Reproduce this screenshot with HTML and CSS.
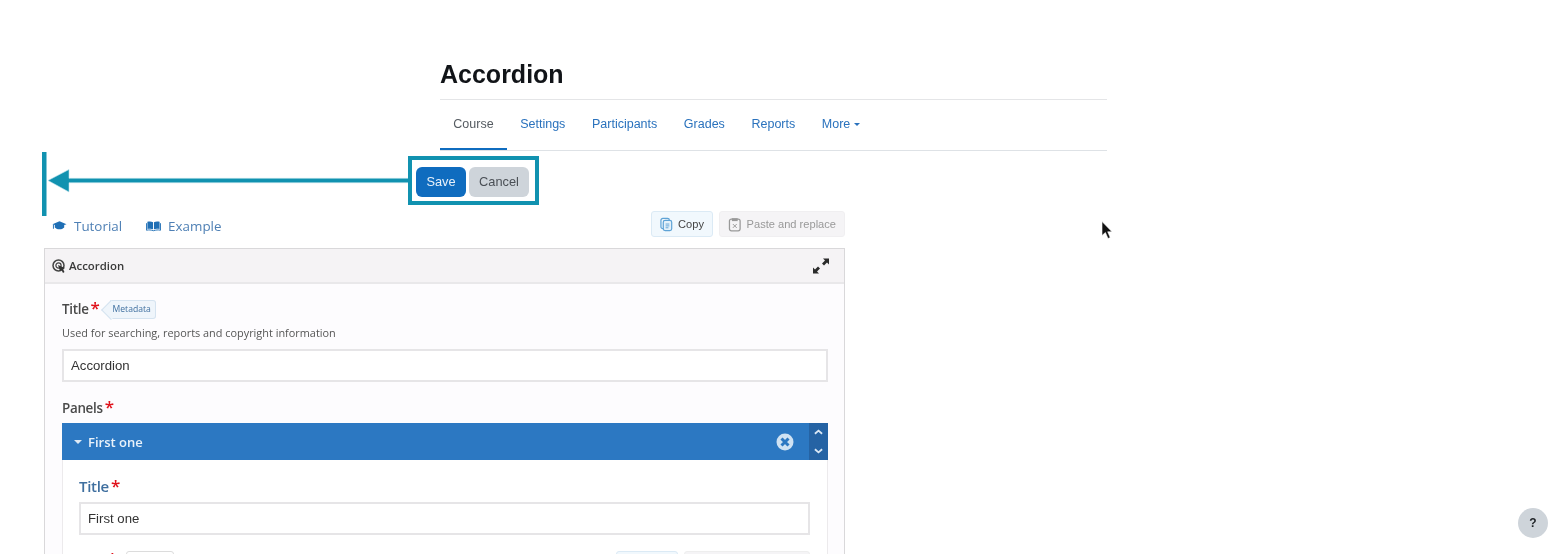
FILE: index.html
```html
<!DOCTYPE html>
<html lang="en">
<head>
<meta charset="utf-8">
<title>Accordion</title>
<link rel="stylesheet" href="styles.css">
</head>
<body>
<div class="page">
  <header class="course">
    <h1 class="course-title">Accordion</h1>
    <nav class="tabs">
      <a class="tab tab-active">Course</a>
      <a class="tab">Settings</a>
      <a class="tab">Participants</a>
      <a class="tab">Grades</a>
      <a class="tab">Reports</a>
      <a class="tab">More<span class="caret"></span></a>
    </nav>
  </header>
  <div class="actions">
    <button class="btn btn-save">Save</button>
    <button class="btn btn-cancel">Cancel</button>
  </div>
  <main class="editor">
    <div class="toolbar">
      <div class="links">
        <a class="link">
          <svg class="link-icon" viewBox="0 0 16 12"><path d="M8 1 0.5 4 3 5v2.500C4.500 9 6 9.400 8 9.400S11.500 9 13 7.500V5l2.500-1zM1 4.500v4.500h1V5z" fill="#1f6fb5"/></svg>
          Tutorial
        </a>
        <a class="link">
          <svg class="link-icon" viewBox="0 0 16 12"><path d="M1.500 1.500C3.500 1 6 1 7.500 2v7.500C6 8.800 3.500 8.800 1.500 9.300zM14.500 1.500C12.500 1 10 1 8.500 2v7.500c1.500-.7 4-.7 6-.2z" fill="#1f6fb5"/><path d="M.5 3v7.500c2.500-.6 5-.3 7.500.5 2.500-.8 5-1.100 7.500-.5V3" fill="none" stroke="#1f6fb5"/></svg>
          Example
        </a>
      </div>
      <div class="clip-buttons">
        <button class="clip clip-copy">
          <svg class="clip-icon" viewBox="0 0 14 15"><rect x="1" y="1" width="9" height="11" rx="2" fill="none" stroke="#5fa3d6" stroke-width="1.300"/><rect x="3.500" y="3" width="9" height="11" rx="2" fill="#e4f1fa" stroke="#5fa3d6" stroke-width="1.300"/><path d="M6 7h4M6 9h4M6 11h3" stroke="#5fa3d6"/></svg>
          Copy
        </button>
        <button class="clip clip-paste">
          <svg class="clip-icon" viewBox="0 0 14 15"><rect x="1.500" y="2" width="11" height="12" rx="2" fill="none" stroke="#999" stroke-width="1.300"/><rect x="4" y="1" width="6" height="3" fill="#999"/><path d="M5 7l4 4M9 7l-4 4" stroke="#999"/></svg>
          Paste and replace
        </button>
      </div>
    </div>
    <section class="box">
      <div class="box-head">
        <span class="box-title">
          <svg class="box-icon" viewBox="0 0 14 14"><circle cx="6.500" cy="6.500" r="5.500" fill="none" stroke="#444" stroke-width="1.500"/><circle cx="6.500" cy="6.500" r="2.600" fill="none" stroke="#444" stroke-width="1.200"/><path d="M6 6l7 3-2 1 1.500 3-1.500 1-1.500-3L8 12z" fill="#333"/></svg>
          Accordion
        </span>
        <svg class="expand" viewBox="0 0 18 18"><path d="M11 1.500h6v6l-2-2-3 3-2-2 3-3zM7 16.500H1v-6l2 2 3-3 2 2-3 3z" fill="#2b2b2b"/></svg>
      </div>
      <div class="box-body">
        <div class="label-row">
          <span class="label">Title<span class="req">*</span></span>
          <span class="tag"><span class="tag-text">Metadata</span></span>
        </div>
        <p class="desc">Used for searching, reports and copyright information</p>
        <div class="input input-main">Accordion</div>
        <div class="label panels-label">Panels<span class="req">*</span></div>
        <div class="panel">
          <div class="panel-bar">
            <span class="panel-caret"></span>
            <span class="panel-name">First one</span>
            <svg class="panel-close" viewBox="0 0 18 18"><circle cx="9" cy="9" r="8.500" fill="#cfe2f3"/><path d="M5.500 5.500l7 7M12.500 5.500l-7 7" stroke="#2c78c2" stroke-width="3"/></svg>
            <div class="panel-order">
              <svg class="chev" viewBox="0 0 10 6"><path d="M1 5 5 1.500 9 5" fill="none" stroke="#dbe8f5" stroke-width="2"/></svg>
              <svg class="chev" viewBox="0 0 10 6"><path d="M1 1 5 4.500 9 1" fill="none" stroke="#dbe8f5" stroke-width="2"/></svg>
            </div>
          </div>
          <div class="panel-body">
            <div class="label label-blue">Title<span class="req">*</span></div>
            <div class="input input-panel">First one</div>
            <div class="text-row">
              <span class="label label-faint">Text<span class="req">*</span></span>
              <span class="tag-plain"></span>
              <span class="spacer"></span>
              <span class="mini mini-copy"></span>
              <span class="mini mini-paste"></span>
            </div>
          </div>
        </div>
      </div>
    </section>
  </main>
</div>

<svg class="arrow" viewBox="0 0 370 64" aria-hidden="true">
  <rect x="0" y="0" width="4.500" height="64" fill="#1192b0"/>
  <path d="M6 28.500 27 17.500v8.800h340v4.400H27v9.300z" fill="#1192b0" stroke="#bfe3ec" stroke-width=".6"/>
</svg>
<div class="highlight"></div>
<svg class="cursor" viewBox="0 0 12 18" aria-hidden="true"><path d="M1 .5v14l3.400-3 2.600 6 2.200-1-2.500-5.700H11z" fill="#111" stroke="#fff" stroke-width=".6"/></svg>
<div class="help">?</div>
</body>
</html>
```
FILE: styles.css
```css
* { box-sizing: border-box; }
html, body { margin: 0; height: 554px; overflow: hidden; background: #fff; }
body { font-family: "Liberation Sans", Arial, sans-serif; position: relative; }
.page { height: 554px; overflow: hidden; filter: blur(.45px); }

.course { margin-left: 440px; width: 667px; padding-top: 59px; }
.course-title { margin: 0; font-size: 25px; line-height: 31px; font-weight: 700; color: #111418; height: 41px; border-bottom: 1px solid #e4e5e7; }
.tabs { display: flex; height: 51px; border-bottom: 1px solid #dee2e6; font-size: 12.500px; }
.tab { display: flex; align-items: center; padding: 0 13.300px; color: #2a72bd; height: 50px; white-space: nowrap; border-bottom: 2px solid transparent; }
.tab-active { color: #555b61; border-bottom-color: #0f6cbf; }
.caret { display: inline-block; margin-left: 4px; border-top: 3.500px solid #2a72bd; border-left: 3.500px solid transparent; border-right: 3.500px solid transparent; }

.actions { display: flex; gap: 3px; margin: 16px 0 0 416px; }
.btn { height: 30px; border: 0; border-radius: 6px; font: 12.800px "Liberation Sans", Arial, sans-serif; padding: 0 0 2px; }
.btn-save { width: 50px; background: #0f6cbf; color: #e8f1fa; }
.btn-cancel { width: 60px; background: #ced4da; color: #4a4f55; }

.editor { margin: 14px 0 0 44px; width: 801px; font-family: "Open Sans", sans-serif; }
.toolbar { display: flex; justify-content: space-between; align-items: center; height: 26px; padding-left: 8px; }
.links { display: flex; gap: 24px; margin-top: 3px; }
.link { display: flex; align-items: center; gap: 7px; font-size: 13.400px; color: #4f80b5; white-space: nowrap; }
.link-icon { width: 15px; height: 12px; }
.clip-buttons { display: flex; gap: 6px; }
.clip { display: flex; align-items: center; gap: 5px; height: 26px; border-radius: 3px; font: 11.100px "Liberation Sans", Arial, sans-serif; padding: 0 8px; white-space: nowrap; }
.clip-icon { width: 14px; height: 15px; }
.clip-copy { width: 62px; background: #f1f8fd; border: 1px solid #dbeaf5; color: #444; }
.clip-paste { width: 126px; background: #f5f4f6; border: 1px solid #f0eff1; color: #999; }

.box { margin-top: 11px; border: 1px solid #d9d8da; background: #fdfcfe; height: 320px; }
.box-head { display: flex; justify-content: space-between; align-items: center; height: 35px; background: #f5f3f5; border-bottom: 2px solid #e9e8ea; padding: 0 14px 0 7px; }
.box-title { display: flex; align-items: center; gap: 3px; font-size: 11.400px; font-weight: 600; color: #3a3a3a; }
.box-icon { width: 14px; height: 14px; }
.expand { width: 18px; height: 18px; }
.box-body { padding: 14px 16px 0 17px; }
.label-row { display: flex; align-items: center; gap: 3px; height: 22px; }
.label { font-size: 13.400px; font-weight: 600; color: #4a4a4a; letter-spacing: -.3px; }
.req { color: #e0131c; font-size: 17px; margin-left: 2px; line-height: 10px; }
.tag { position: relative; margin-left: 7px; height: 19px; padding: 0 4px 0 3px; display: flex; align-items: center; background: #eff5fb; border: 1px solid #d5e3f0; border-left: 0; border-radius: 0 3px 3px 0; font-size: 8.600px; font-weight: 500; color: #3f6f9f; letter-spacing: 0; }
.tag::before { content: ""; position: absolute; left: -6px; top: 2px; width: 13px; height: 13px; background: #eff5fb; border-left: 1px solid #d5e3f0; border-bottom: 1px solid #d5e3f0; transform: rotate(45deg); }
.tag-text { position: relative; }
.desc { margin: 5px 0 8px; font-size: 10.900px; line-height: 16px; color: #555; }
.input { border: 2px solid #e6e5e7; background: #fff; font-size: 13.200px; color: #333; display: flex; align-items: center; padding-left: 7px; }
.input-main { height: 33px; font-family: "Liberation Sans", Arial, sans-serif; }
.panels-label { margin: 16px 0 5px; height: 20px; line-height: 20px; }
.panel { border-right: 1px solid #eceaec; border-left: 1px solid #eceaec; }
.panel-bar { display: flex; align-items: center; height: 37px; background: #2c78c2; margin: 0 -1px; padding-left: 12px; color: #e9f2fa; }
.panel-caret { border-top: 4px solid #dfeaf5; border-left: 4px solid transparent; border-right: 4px solid transparent; margin-right: 6px; }
.panel-name { font-size: 13px; font-weight: 600; flex: 1; }
.panel-close { width: 18px; height: 18px; margin-right: 15px; }
.panel-order { width: 19px; height: 37px; background: #2563a4; display: flex; flex-direction: column; justify-content: space-between; align-items: center; padding: 6px 0; }
.chev { width: 9px; height: 6px; }
.panel-body { padding: 15px 17px 0 16px; background: #fff; height: 120px; }
.label-blue { color: #3f6f9f; font-size: 15px; height: 27px; line-height: 22px; }
.input-panel { height: 33px; font-family: "Liberation Sans", Arial, sans-serif; }
.text-row { display: flex; gap: 6px; margin-top: 16px; height: 30px; }
.label-faint { color: #bbb; width: 41px; }
.tag-plain { width: 48px; height: 20px; border: 1px solid #dcdcdc; border-radius: 3px; }
.spacer { flex: 1; }
.mini { height: 20px; border-radius: 3px; }
.mini-copy { width: 62px; background: #f1f8fd; border: 1px solid #dbeaf5; }
.mini-paste { width: 126px; background: #f5f4f6; border: 1px solid #eee; }

.arrow { position: absolute; left: 42px; top: 152px; width: 370px; height: 64px; filter: blur(.3px); }
.highlight { position: absolute; left: 408px; top: 156px; width: 131px; height: 49px; border: 4.500px solid #1192b0; }
.cursor { position: absolute; left: 1101px; top: 221px; width: 12px; height: 18px; filter: blur(.5px); }
.help { position: absolute; left: 1518px; top: 508px; width: 30px; height: 30px; border-radius: 50%; background: #ced4da; color: #1d2125; font-size: 12px; font-weight: 700; display: flex; align-items: center; justify-content: center; filter: blur(.4px); }
```
